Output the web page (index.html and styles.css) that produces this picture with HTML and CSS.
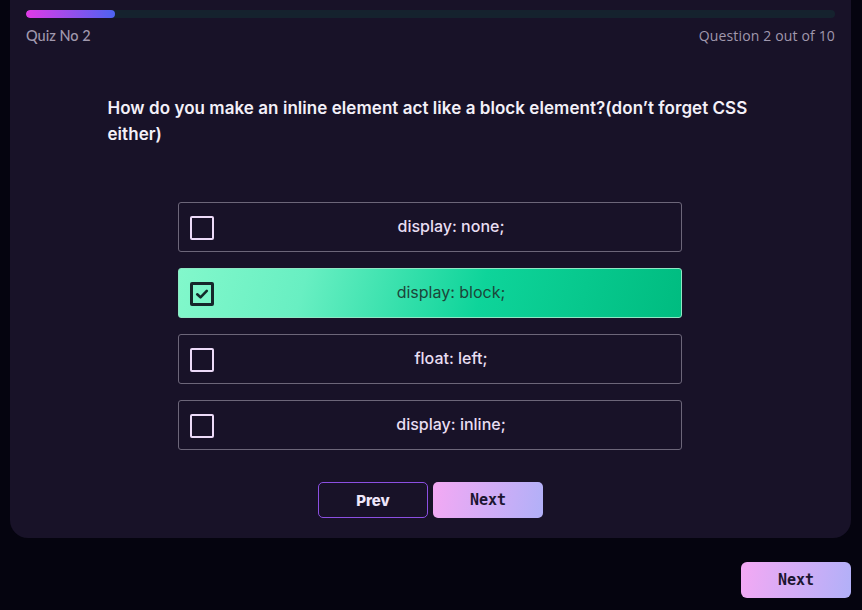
FILE: index.html
```html
<!DOCTYPE html>
<html>
<head>
<meta charset="utf-8">
<link rel="stylesheet" href="styles.css">
</head>
<body>
<div class="card">
  <div class="progress"><div class="progress-fill" style="width: 11%"></div></div>
  <div class="meta">
    <span class="quiz-no">Quiz No 2</span>
    <span class="quiz-count">Question 2 out of 10</span>
  </div>
  <h2 class="question">How do you make an inline element act like a block element?(don’t forget CSS either)</h2>
  <div class="options">
    <div class="option"><span class="box"></span><span class="label">display: none;</span></div>
    <div class="option selected"><span class="box"><svg viewBox="0 0 16 16" width="16" height="16"><path d="M3.2 8.3 L6.5 11.3 L12.8 4.9" fill="none" stroke="#132a2a" stroke-width="2.6" stroke-linecap="round" stroke-linejoin="round"/></svg></span><span class="label">display: block;</span></div>
    <div class="option"><span class="box"></span><span class="label">float: left;</span></div>
    <div class="option"><span class="box"></span><span class="label">display: inline;</span></div>
  </div>
  <div class="nav">
    <button class="btn prev">Prev</button>
    <button class="btn next">Next</button>
  </div>
</div>
<div class="footer">
  <button class="btn next outer">Next</button>
</div>
</body>
</html>
```

FILE: styles.css
```css
html, body {
  margin: 0;
  padding: 0;
  background: #05040f;
  height: 100%;
}
body {
  font-family: "Inter", "Liberation Sans", sans-serif;
}
.card {
  margin: 0 11px 0 10px;
  background: #181228;
  border-radius: 0 0 18px 18px;
  padding: 10px 16px 20px 16px;
}
.progress {
  height: 8px;
  border-radius: 4px;
  background: #15222e;
  overflow: hidden;
}
.progress-fill {
  height: 100%;
  border-radius: 4px;
  background: linear-gradient(90deg, #e03ae6, #4d63f2);
}
.meta {
  display: flex;
  justify-content: space-between;
  margin-top: 9px;
  font-size: 14px;
  line-height: 18px;
  color: #a098ad;
}
.quiz-no {
  font-family: "Lato", sans-serif;
  font-size: 14.5px;
  font-weight: 500;
}
.quiz-count {
  font-family: "Open Sans", sans-serif;
  font-size: 14px;
  font-weight: 500;
  letter-spacing: 0.15px;
}
.question {
  width: 646px;
  margin: 50px auto 0 auto;
  font-size: 17px;
  line-height: 26px;
  font-weight: 600;
  letter-spacing: 0.05px;
  color: #f3f0f8;
}
.options {
  width: 504px;
  margin: 55px auto 0 auto;
  display: flex;
  flex-direction: column;
  gap: 16px;
  position: relative;
  left: -1px;
}
.option {
  height: 50px;
  box-sizing: border-box;
  border: 1px solid #6c6679;
  border-radius: 3px;
  display: flex;
  align-items: center;
  padding-left: 11px;
}
.box {
  width: 24px;
  height: 24px;
  box-sizing: border-box;
  border: 2px solid #ecdaf8;
  border-radius: 2px;
  display: flex;
  align-items: center;
  justify-content: center;
  margin-top: 2px;
}
.label {
  flex: 1;
  text-align: center;
  font-size: 16px;
  font-weight: 500;
  color: #e8def2;
  margin-top: -3px;
  padding-left: 8px;
}
.option.selected {
  border-color: #8ee8c4;
  background: linear-gradient(105deg, #82f8cb 0%, #68efc2 25%, #0ed49a 60%, #00bc80 100%);
}
.option.selected .box {
  border: 3px solid #16262a;
}
.option.selected .label {
  color: #1c4639;
  font-weight: 400;
}
.nav {
  display: flex;
  justify-content: center;
  gap: 5px;
  margin-top: 32px;
}
.btn {
  width: 110px;
  height: 36px;
  box-sizing: border-box;
  border-radius: 5px;
  font-size: 15px;
  font-weight: 700;
  cursor: pointer;
}
.prev {
  background: transparent;
  border: 1px solid #8b4fe2;
  color: #efe6fa;
  font-family: "Inter", sans-serif;
  font-weight: 800;
}
.next {
  border: none;
  background: linear-gradient(100deg, #f4a9f4, #b1b0f8);
  color: #1c1630;
  font-family: "DejaVu Sans Mono", monospace;
  font-size: 15px;
}
.footer {
  display: flex;
  justify-content: flex-end;
  padding: 24px 11px 0 0;
}
.outer {
  border-radius: 6px;
}
```
